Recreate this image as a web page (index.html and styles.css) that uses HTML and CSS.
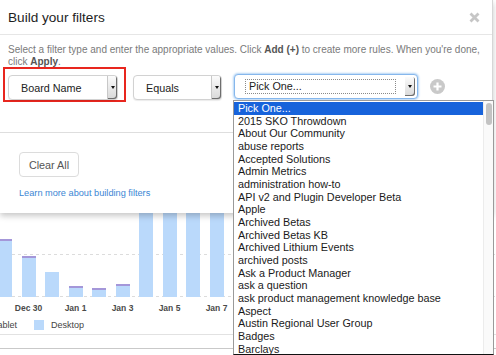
FILE: index.html
```html
<!DOCTYPE html>
<html lang="en">
<head>
    <meta charset="UTF-8">
    <meta name="viewport" content="width=device-width, initial-scale=1.0">
    <title>Build your filters</title>
    <link rel="stylesheet" href="styles.css">
</head>
<body>
    <!-- page behind the dialog: the traffic chart -->
    <div class="page">
        <div class="plot">
            <div class="bars">
                <div class="bar tab" style="height:58px"></div>
                <div class="bar tab" style="height:41px"></div>
                <div class="bar" style="height:25px"></div>
                <div class="bar tab" style="height:11px"></div>
                <div class="bar tab" style="height:9px"></div>
                <div class="bar tab" style="height:13px"></div>
                <div class="bar" style="height:130px"></div>
                <div class="bar" style="height:130px"></div>
                <div class="bar" style="height:130px"></div>
                <div class="bar" style="height:130px"></div>
            </div>
        </div>
        <div class="xlabels">
            <span>Dec 30</span>
            <span>Jan 1</span>
            <span>Jan 3</span>
            <span>Jan 5</span>
            <span>Jan 7</span>
        </div>
        <div class="legend">
            <span>Tablet</span>
            <i class="swatch"></i>
            <span>Desktop</span>
        </div>
        <div class="chart-foot"></div>
    </div>

    <div class="modal">
        <div class="modal-header">
            <h2>Build your filters</h2>
            <svg class="close" width="11" height="11" viewBox="0 0 11 11">
                <path d="M1.5 1.5 L9.5 9.5 M9.5 1.5 L1.5 9.5" stroke="#c6c6c6" stroke-width="2.8"/>
            </svg>
        </div>
        <div class="modal-body">
            <p class="desc">Select a filter type and enter the appropriate values. Click <b>Add (+)</b> to create more rules. When you're done,<br>click <b>Apply</b>.</p>
            <div class="filter-row">
                <div class="callout">
                    <div class="select board">
                        <span class="label">Board Name</span>
                        <span class="arrow"></span>
                    </div>
                </div>
                <div class="select equals">
                    <span class="label">Equals</span>
                    <span class="arrow"></span>
                </div>
                <div class="select pick">
                    <span class="field">Pick One...</span>
                    <span class="arrow"></span>
                </div>
                <svg class="add" width="15" height="15" viewBox="0 0 15 15">
                    <circle cx="7.5" cy="7.5" r="7.5" fill="#c9c9c9"/>
                    <path d="M7.5 3.5 V11.5 M3.5 7.5 H11.5" stroke="#fff" stroke-width="2.2"/>
                </svg>
            </div>
        </div>
        <div class="modal-footer">
            <button class="btn">Clear All</button>
            <a class="learn" href="#">Learn more about building filters</a>
        </div>
    </div>

    <!-- open native list of the third select -->
    <div class="listbox">
        <ul class="options">
            <li class="selected">Pick One...</li>
            <li>2015 SKO Throwdown</li>
            <li>About Our Community</li>
            <li>abuse reports</li>
            <li>Accepted Solutions</li>
            <li>Admin Metrics</li>
            <li>administration how-to</li>
            <li>API v2 and Plugin Developer Beta</li>
            <li>Apple</li>
            <li>Archived Betas</li>
            <li>Archived Betas KB</li>
            <li>Archived Lithium Events</li>
            <li>archived posts</li>
            <li>Ask a Product Manager</li>
            <li>ask a question</li>
            <li>ask product management knowledge base</li>
            <li>Aspect</li>
            <li>Austin Regional User Group</li>
            <li>Badges</li>
            <li>Barclays</li>
        </ul>
        <div class="scrollbar"><div class="thumb"></div></div>
    </div>
</body>
</html>
```

FILE: styles.css
```css
body {
    margin: 0;
    font-family: "Liberation Sans", Arial, Helvetica, sans-serif;
    background: #fff;
    color: #222;
    overflow: hidden;
}
.page {
    width: 496px;
    height: 355px;
}
.plot {
    height: 297px;
    background:
        repeating-linear-gradient(to right, #dcdcdc 0 3px, transparent 3px 6px) 0 254px / 100% 1px no-repeat,
        repeating-linear-gradient(to right, #dcdcdc 0 3px, transparent 3px 6px) 0 296px / 100% 1px no-repeat;
    display: flex;
    align-items: flex-end;
}
.bars {
    display: flex;
    align-items: flex-end;
    gap: 9.5px;
    margin-left: -2px;
}
.bar {
    width: 14px;
    background: #bad9fb;
    box-sizing: border-box;
}
.bar.tab {
    border-top: 2px solid #a497d9;
}
.xlabels {
    display: flex;
    padding: 5px 0 0 5px;
    height: 12px;
}
.xlabels span {
    width: 47px;
    text-align: center;
    font-size: 8.5px;
    line-height: 12px;
    font-weight: bold;
    color: #4a4a4a;
}
.legend {
    display: flex;
    align-items: center;
    margin: 5px 0 0 -7px;
    height: 12px;
    font-size: 9px;
    color: #444;
}
.swatch {
    width: 10px;
    height: 10px;
    background: #bad9fb;
    margin: 0 7px 0 17px;
}
.chart-foot {
    margin-top: 3px;
    height: 13px;
    border-top: 1px solid #e2e2e2;
    border-bottom: 1px solid #c9c9c9;
}

/* dialog */
.modal {
    position: absolute;
    top: 0;
    left: 0;
    width: 493px;
    background: #fff;
    border-right: 1px solid #d6d6d6;
    box-sizing: border-box;
    box-shadow: 0 3px 6px rgba(0, 0, 0, 0.22);
}
.modal-header {
    height: 34px;
    border-bottom: 1px solid #e6e6e6;
    display: flex;
    align-items: center;
    justify-content: space-between;
    padding: 0 12px 0 8px;
}
.modal-header h2 {
    margin: 0;
    font-size: 13.6px;
    font-weight: normal;
    color: #1e1e1e;
}
.modal-body {
    padding: 9px 0 30px 0;
    border-bottom: 1px solid #dedede;
}
.desc {
    margin: 0 0 0 8px;
    font-size: 10px;
    line-height: 12px;
    color: #7a7a7a;
}
.desc b {
    color: #555;
}
.filter-row {
    display: flex;
    align-items: flex-start;
    margin-top: -1px;
    padding-left: 3px;
}
.callout {
    border: 2px solid #e8261e;
    padding: 6px 6px 0 3px;
}
.select {
    height: 25px;
    box-sizing: border-box;
    border: 1px solid #d2d2d2;
    border-radius: 4px;
    background: #fff;
    box-shadow: 0 1px 1px rgba(0, 0, 0, 0.08);
    display: flex;
    align-items: center;
    font-size: 10.8px;
    color: #222;
}
.select .label {
    flex: 1;
    padding-left: 12px;
}
.select .arrow {
    width: 10px;
    height: 100%;
    box-sizing: border-box;
    background: linear-gradient(#fbfbfb, #d9d9d9);
    border-left: 1px solid #c8c8c8;
    border-radius: 0 3px 3px 0;
    box-shadow: inset -1px -1px 0 #6e6e6e;
    display: flex;
    align-items: center;
    justify-content: center;
}
.select .arrow::after {
    content: "";
    border-left: 2.5px solid transparent;
    border-right: 2.5px solid transparent;
    border-top: 3px solid #111;
}
.board {
    width: 110px;
}
.equals {
    width: 89px;
    margin: 8px 0 0 7px;
}
.pick {
    width: 184px;
    margin: 7px 0 0 12px;
    border-color: #86b7ec;
    box-shadow: 0 0 2px 1px #b3d4f5;
    padding-right: 2px;
}
.pick .field {
    width: 151px;
    height: 15px;
    box-sizing: border-box;
    margin-left: 10px;
    border: 1px dotted #8a8a8a;
    padding-left: 3px;
    line-height: 13px;
}
.pick .arrow {
    height: 19px;
    margin-left: auto;
    border-left: none;
}
.add {
    margin: 12px 0 0 12px;
}
.modal-footer {
    padding: 19px 0 14px 19px;
    display: flex;
    flex-direction: column;
    align-items: flex-start;
}
.btn {
    width: 60px;
    height: 25px;
    border: 1px solid #dcdcdc;
    border-radius: 4px;
    background: #fff;
    font-family: inherit;
    font-size: 10.8px;
    color: #555;
    padding: 0;
}
.learn {
    margin-top: 10px;
    font-size: 9.2px;
    line-height: 12px;
    color: #3b86d4;
    text-decoration: none;
}

/* open option list */
.listbox {
    position: absolute;
    top: 100px;
    left: 233px;
    width: 261px;
    height: 255px;
    box-sizing: border-box;
    border: 1px solid #9a9a9a;
    border-bottom-color: #111;
    background: #fff;
    display: flex;
    overflow: hidden;
}
.options {
    flex: 1;
    margin: 0;
    padding: 1px 0 0 0;
    list-style: none;
    font-size: 10.8px;
    color: #1a1a1a;
}
.options li {
    height: 12.68px;
    line-height: 12.68px;
    padding-left: 4px;
    white-space: nowrap;
}
.options li.selected {
    background: #1763db;
    color: #fff;
}
.scrollbar {
    width: 9px;
    background: #fafafa;
    border-left: 1px solid #ececec;
    display: flex;
    justify-content: center;
    padding-top: 2px;
}
.thumb {
    width: 6px;
    height: 22px;
    border-radius: 3px;
    background: #c3c3c3;
}
```
